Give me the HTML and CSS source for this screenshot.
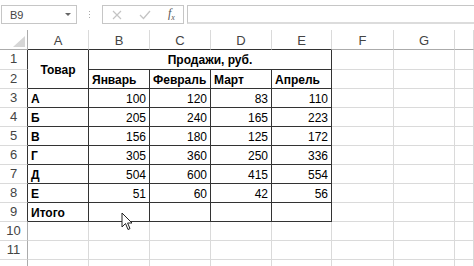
FILE: index.html
```html
<!DOCTYPE html>
<html lang="ru">

<head>
  <meta charset="UTF-8" />
  <meta name="viewport" content="width=device-width, initial-scale=1.0" />
  <title>Продажи</title>
  <link rel="stylesheet" href="styles.css">
</head>

<body>
  <div class="toolbar">
    <div class="namebox">
      <span>B9</span>
      <span class="caret"></span>
    </div>
    <div class="grip"><i></i><i></i><i></i></div>
    <div class="fxbox">
      <svg width="10" height="10" viewBox="0 0 10 10"><path d="M1 1 L9 9 M9 1 L1 9" stroke="#c4c4c4" stroke-width="1.2" fill="none"/></svg>
      <svg width="12" height="10" viewBox="0 0 12 10"><path d="M1 5 L4.5 8.5 L11 1" stroke="#c4c4c4" stroke-width="1.3" fill="none"/></svg>
      <span class="fx">f<sub>x</sub></span>
    </div>
    <div class="formula"></div>
  </div>

  <div class="sheet">
    <!-- заголовки столбцов -->
    <div class="corner"><span class="tri"></span></div>
    <div class="colh dk">A</div>
    <div class="colh dk">B</div>
    <div class="colh dk">C</div>
    <div class="colh dk">D</div>
    <div class="colh dk">E</div>
    <div class="colh">F</div>
    <div class="colh">G</div>
    <div class="colh"></div>

    <!-- 1 -->
    <div class="rowh dk">1</div>
    <div class="c t b ctr tall">Товар</div>
    <div class="c t b ctr wide">Продажи, руб.</div>
    <div class="c"></div><div class="c"></div><div class="c"></div>

    <!-- 2 -->
    <div class="rowh dk">2</div>
    <div class="c t b">Январь</div>
    <div class="c t b">Февраль</div>
    <div class="c t b">Март</div>
    <div class="c t b">Апрель</div>
    <div class="c"></div><div class="c"></div><div class="c"></div>

    <!-- 3 -->
    <div class="rowh dk">3</div>
    <div class="c t b">А</div>
    <div class="c t n">100</div>
    <div class="c t n">120</div>
    <div class="c t n">83</div>
    <div class="c t n">110</div>
    <div class="c"></div><div class="c"></div><div class="c"></div>

    <!-- 4 -->
    <div class="rowh dk">4</div>
    <div class="c t b">Б</div>
    <div class="c t n">205</div>
    <div class="c t n">240</div>
    <div class="c t n">165</div>
    <div class="c t n">223</div>
    <div class="c"></div><div class="c"></div><div class="c"></div>

    <!-- 5 -->
    <div class="rowh dk">5</div>
    <div class="c t b">В</div>
    <div class="c t n">156</div>
    <div class="c t n">180</div>
    <div class="c t n">125</div>
    <div class="c t n">172</div>
    <div class="c"></div><div class="c"></div><div class="c"></div>

    <!-- 6 -->
    <div class="rowh dk">6</div>
    <div class="c t b">Г</div>
    <div class="c t n">305</div>
    <div class="c t n">360</div>
    <div class="c t n">250</div>
    <div class="c t n">336</div>
    <div class="c"></div><div class="c"></div><div class="c"></div>

    <!-- 7 -->
    <div class="rowh dk">7</div>
    <div class="c t b">Д</div>
    <div class="c t n">504</div>
    <div class="c t n">600</div>
    <div class="c t n">415</div>
    <div class="c t n">554</div>
    <div class="c"></div><div class="c"></div><div class="c"></div>

    <!-- 8 -->
    <div class="rowh dk">8</div>
    <div class="c t b">Е</div>
    <div class="c t n">51</div>
    <div class="c t n">60</div>
    <div class="c t n">42</div>
    <div class="c t n">56</div>
    <div class="c"></div><div class="c"></div><div class="c"></div>

    <!-- 9 -->
    <div class="rowh dk">9</div>
    <div class="c t b">Итого</div>
    <div class="c t"></div>
    <div class="c t"></div>
    <div class="c t"></div>
    <div class="c t"></div>
    <div class="c"></div><div class="c"></div><div class="c"></div>

    <!-- 10 -->
    <div class="rowh">10</div>
    <div class="c"></div><div class="c"></div><div class="c"></div><div class="c"></div>
    <div class="c"></div><div class="c"></div><div class="c"></div><div class="c"></div>

    <!-- 11 -->
    <div class="rowh">11</div>
    <div class="c"></div><div class="c"></div><div class="c"></div><div class="c"></div>
    <div class="c"></div><div class="c"></div><div class="c"></div><div class="c"></div>

    <!-- 12 (виден только край) -->
    <div class="rowh"></div>
    <div class="c"></div><div class="c"></div><div class="c"></div><div class="c"></div>
    <div class="c"></div><div class="c"></div><div class="c"></div><div class="c"></div>
  </div>

  <!-- курсор мыши над B9 -->
  <svg class="cursor" width="12" height="19" viewBox="0 0 12 19">
    <path d="M1 1 L1 15 L4.5 11.5 L7 17.5 L9 16.6 L6.6 11 L11 11 Z" fill="#fff" stroke="#222" stroke-width="1" stroke-linejoin="round"/>
  </svg>
</body>

</html>
```

FILE: styles.css
```css
body {
  margin: 0;
  width: 474px;
  height: 266px;
  overflow: hidden;
  position: relative;
  background: #fff;
  font-family: "Liberation Sans", Arial, sans-serif;
  color: #000;
}

/* строка формул */
.toolbar {
  display: flex;
  align-items: flex-start;
  height: 30px;
  padding-top: 5px;
  box-sizing: border-box;
}

.namebox {
  margin-left: 1px;
  width: 76px;
  height: 19px;
  box-sizing: border-box;
  border: 1px solid #c6c6c6;
  display: flex;
  align-items: center;
  justify-content: space-between;
  padding: 0 5px 0 8px;
  font-size: 11px;
  color: #444;
}

.namebox .caret {
  width: 0;
  height: 0;
  border-left: 3px solid transparent;
  border-right: 3px solid transparent;
  border-top: 3px solid #666;
}

.grip {
  width: 25px;
  height: 19px;
  display: flex;
  flex-direction: column;
  align-items: center;
  justify-content: center;
  gap: 2px;
}

.grip i {
  width: 1px;
  height: 1px;
  background: #aaa;
}

.fxbox {
  width: 82px;
  height: 19px;
  box-sizing: border-box;
  border: 1px solid #c6c6c6;
  display: flex;
  align-items: center;
  padding-left: 9px;
}

.fxbox svg {
  margin-right: 17px;
}

.fxbox .fx {
  font-family: "Liberation Serif", serif;
  font-style: italic;
  font-size: 12px;
  color: #555;
}

.fxbox .fx sub {
  font-size: 8px;
}

.formula {
  flex: 1;
  margin-left: 3px;
  height: 19px;
  box-sizing: border-box;
  border: 1px solid #c6c6c6;
  border-right: 0;
  border-bottom-width: 2px;
  border-bottom-color: #dcdcdc;
}

/* лист */
.sheet {
  display: grid;
  grid-template-columns: 28px 61px 61px 61px 61px 60px 62px 61px 1fr;
  grid-template-rows: 20px 20px repeat(11, 19px);
}

.sheet > div {
  box-sizing: border-box;
  border-right: 1px solid #dadada;
  border-bottom: 1px solid #dadada;
  font-size: 12px;
  line-height: 18px;
  white-space: nowrap;
  overflow: hidden;
}

.corner {
  position: relative;
  border-right-color: #ababab !important;
  border-bottom-color: #ababab !important;
}

.corner .tri {
  position: absolute;
  right: 2px;
  bottom: 2px;
  width: 0;
  height: 0;
  border-left: 12px solid transparent;
  border-bottom: 11px solid #d6d6d6;
}

.colh {
  text-align: center;
  color: #444;
  font-size: 13px !important;
  padding-top: 2px;
  border-bottom-color: #ababab !important;
}

.colh.dk {
  border-bottom-color: #333 !important;
}

.rowh {
  text-align: center;
  color: #444;
  font-size: 13px !important;
  border-right-color: #ababab !important;
}

.rowh.dk {
  border-right-color: #333 !important;
}

.sheet .t {
  border-right-color: #333;
  border-bottom-color: #333;
}

.c {
  padding: 1px 3px 0;
}

.b {
  font-weight: bold;
}

.n {
  text-align: right;
}

.ctr {
  text-align: center;
  display: flex;
  align-items: center;
  justify-content: center;
}

.tall {
  grid-row: span 2;
}

.wide {
  grid-column: span 4;
}

.cursor {
  position: absolute;
  left: 121px;
  top: 212px;
}
```
